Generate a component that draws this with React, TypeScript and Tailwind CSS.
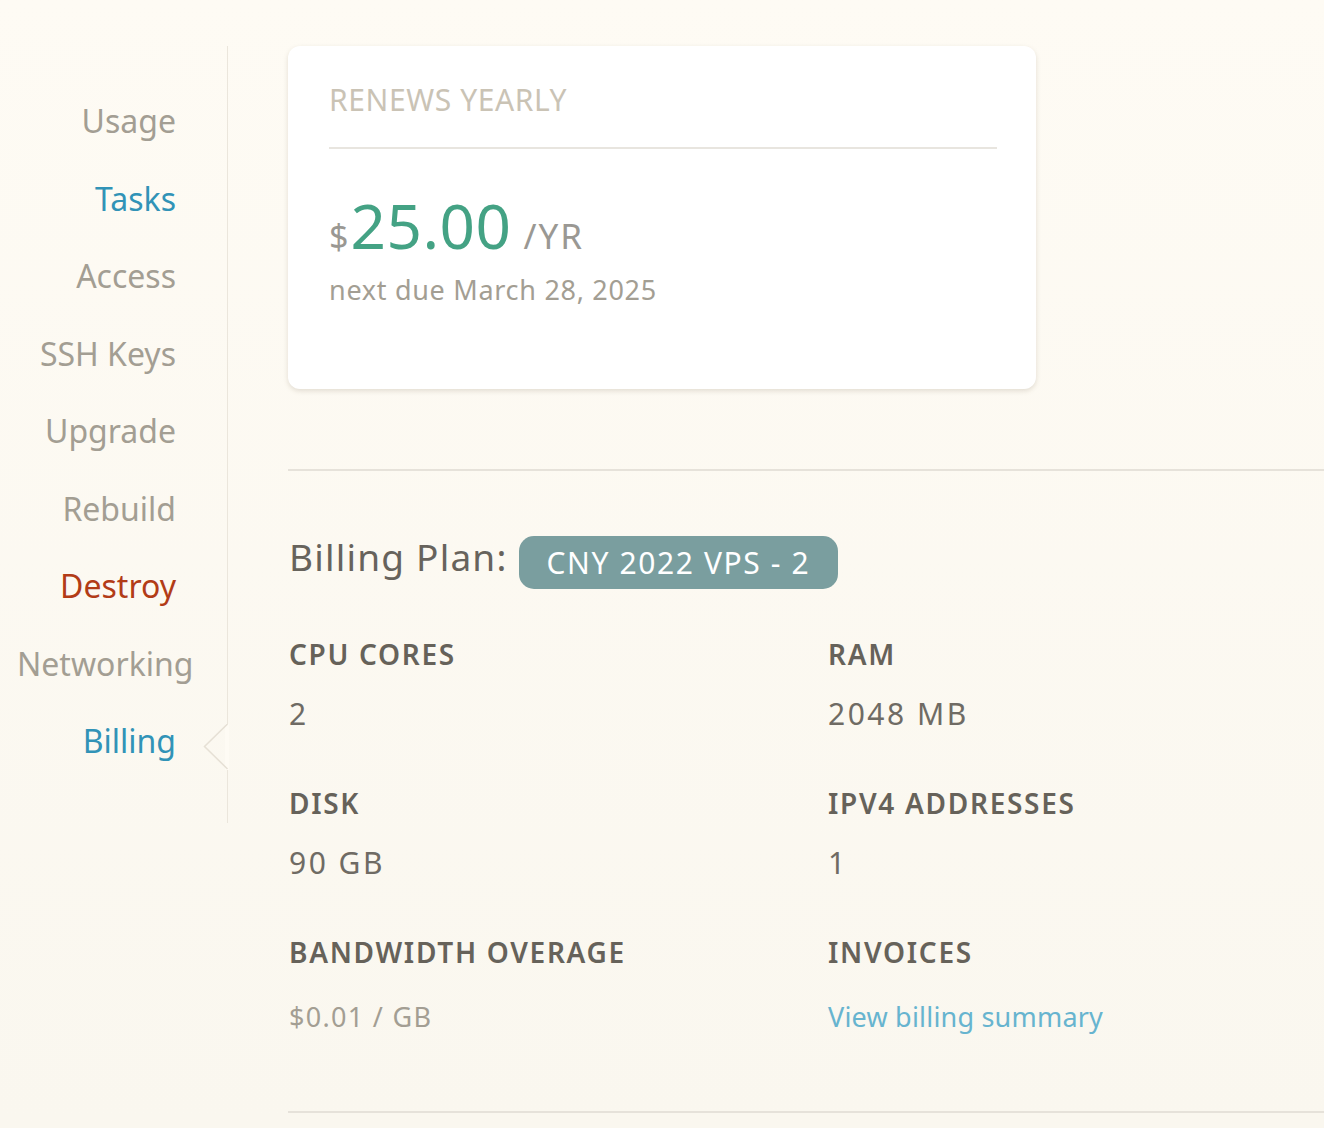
import { useState } from "react";

const NAV = [
  { label: "Usage", tone: "text-[#a39e93]" },
  { label: "Tasks", tone: "text-[#3193b7]" },
  { label: "Access", tone: "text-[#a39e93]" },
  { label: "SSH Keys", tone: "text-[#a39e93]" },
  { label: "Upgrade", tone: "text-[#a39e93]" },
  { label: "Rebuild", tone: "text-[#a39e93]" },
  { label: "Destroy", tone: "text-[#b23c17]" },
  { label: "Networking", tone: "text-[#a39e93]" },
  { label: "Billing", tone: "text-[#3193b7]" },
];

const SPECS = [
  { name: "CPU CORES", value: "2" },
  { name: "RAM", value: "2048 MB" },
  { name: "DISK", value: "90 GB" },
  { name: "IPV4 ADDRESSES", value: "1" },
];

function Sidebar({ active }: { active: string }) {
  return (
    <nav className="w-[228px] shrink-0 self-start border-r border-[#ebe6dc] pl-[17px] pr-[51px] pt-[36px] pb-[43px]">
      {NAV.map((item) => (
        <div key={item.label} className="relative">
          <a href="#" className={`block whitespace-nowrap text-right text-[32px] leading-[77.5px] ${item.tone}`}>
            {item.label}
          </a>
          {item.label === active && (
            <svg className="absolute right-[-53px] top-[22px]" width="26" height="46" viewBox="0 0 26 46">
              <rect x="22" y="0" width="4" height="46" fill="#fefbf4" />
              <polyline points="24.5,0 1.5,22.5 24.5,45" fill="none" stroke="#e6e0d5" strokeWidth="1.5" />
            </svg>
          )}
        </div>
      ))}
    </nav>
  );
}

function RenewalCard() {
  return (
    <div className="w-[748px] rounded-[12px] bg-white pl-[41px] pr-[39px] pt-[39px] pb-[86px] shadow-[0_2px_5px_rgba(120,105,80,0.2)]">
      <div className="text-[30px] leading-none tracking-[0.6px] text-[#cac3b5]">RENEWS YEARLY</div>
      <div className="mt-[32px] h-[2px] bg-[#e8e5df]" />
      <div className="mt-[45px] flex items-baseline leading-none">
        <span className="text-[34px] text-[#9a9893]">$</span>
        <span className="ml-[2px] text-[62px] tracking-[0.5px] text-[#44a284]">25.00</span>
        <span className="ml-[12px] text-[35px] tracking-[2px] text-[#9a9893]">/YR</span>
      </div>
      <div className="mt-[20px] text-[27px] leading-none tracking-[0.7px] text-[#a39e93]">next due March 28, 2025</div>
    </div>
  );
}

function PlanDetails() {
  return (
    <div className="pl-[1px]">
      <div className="flex items-center gap-[11px]">
        <h2 className="pb-[12px] text-[37px] leading-none tracking-[1.2px] text-[#67635c]">Billing Plan:</h2>
        <span className="rounded-[15px] bg-[#7a9e9f] px-[28px] py-[11px] text-[30px] leading-[31px] tracking-[1.6px] text-white">
          CNY 2022 VPS - 2
        </span>
      </div>
      <div className="mt-[51px] grid grid-cols-[539px_1fr] gap-y-[60px]">
        {SPECS.map((s) => (
          <div key={s.name}>
            <div className="text-[28px] font-semibold leading-none tracking-[1.7px] text-[#66625a]">{s.name}</div>
            <div className="mt-[31px] text-[30px] leading-none tracking-[2.5px] text-[#6f6b64]">{s.value}</div>
          </div>
        ))}
        <div>
          <div className="text-[28px] font-semibold leading-none tracking-[1.7px] text-[#66625a]">BANDWIDTH OVERAGE</div>
          <div className="mt-[37px] text-[27px] leading-none tracking-[1.3px] text-[#a39e93]">$0.01 / GB</div>
        </div>
        <div>
          <div className="text-[28px] font-semibold leading-none tracking-[1.7px] text-[#66625a]">INVOICES</div>
          <a href="#" className="mt-[37px] block text-[27px] leading-none tracking-[0.2px] text-[#67b4cf]">
            View billing summary
          </a>
        </div>
      </div>
    </div>
  );
}

export default function App() {
  const [active] = useState("Billing");
  return (
    <div className="min-h-[1128px] bg-gradient-to-b from-[#fefbf4] to-[#faf7ef] font-['Noto_Sans',sans-serif]">
      <div className="flex pt-[46px]">
        <Sidebar active={active} />
        <main className="ml-[60px] flex-1">
          <RenewalCard />
          <div className="mt-[80px] h-[2px] bg-[#e6e2da]" />
          <div className="mt-[65px]">
            <PlanDetails />
          </div>
          <div className="mt-[81px] h-[2px] bg-[#e6e2da]" />
        </main>
      </div>
    </div>
  );
}
